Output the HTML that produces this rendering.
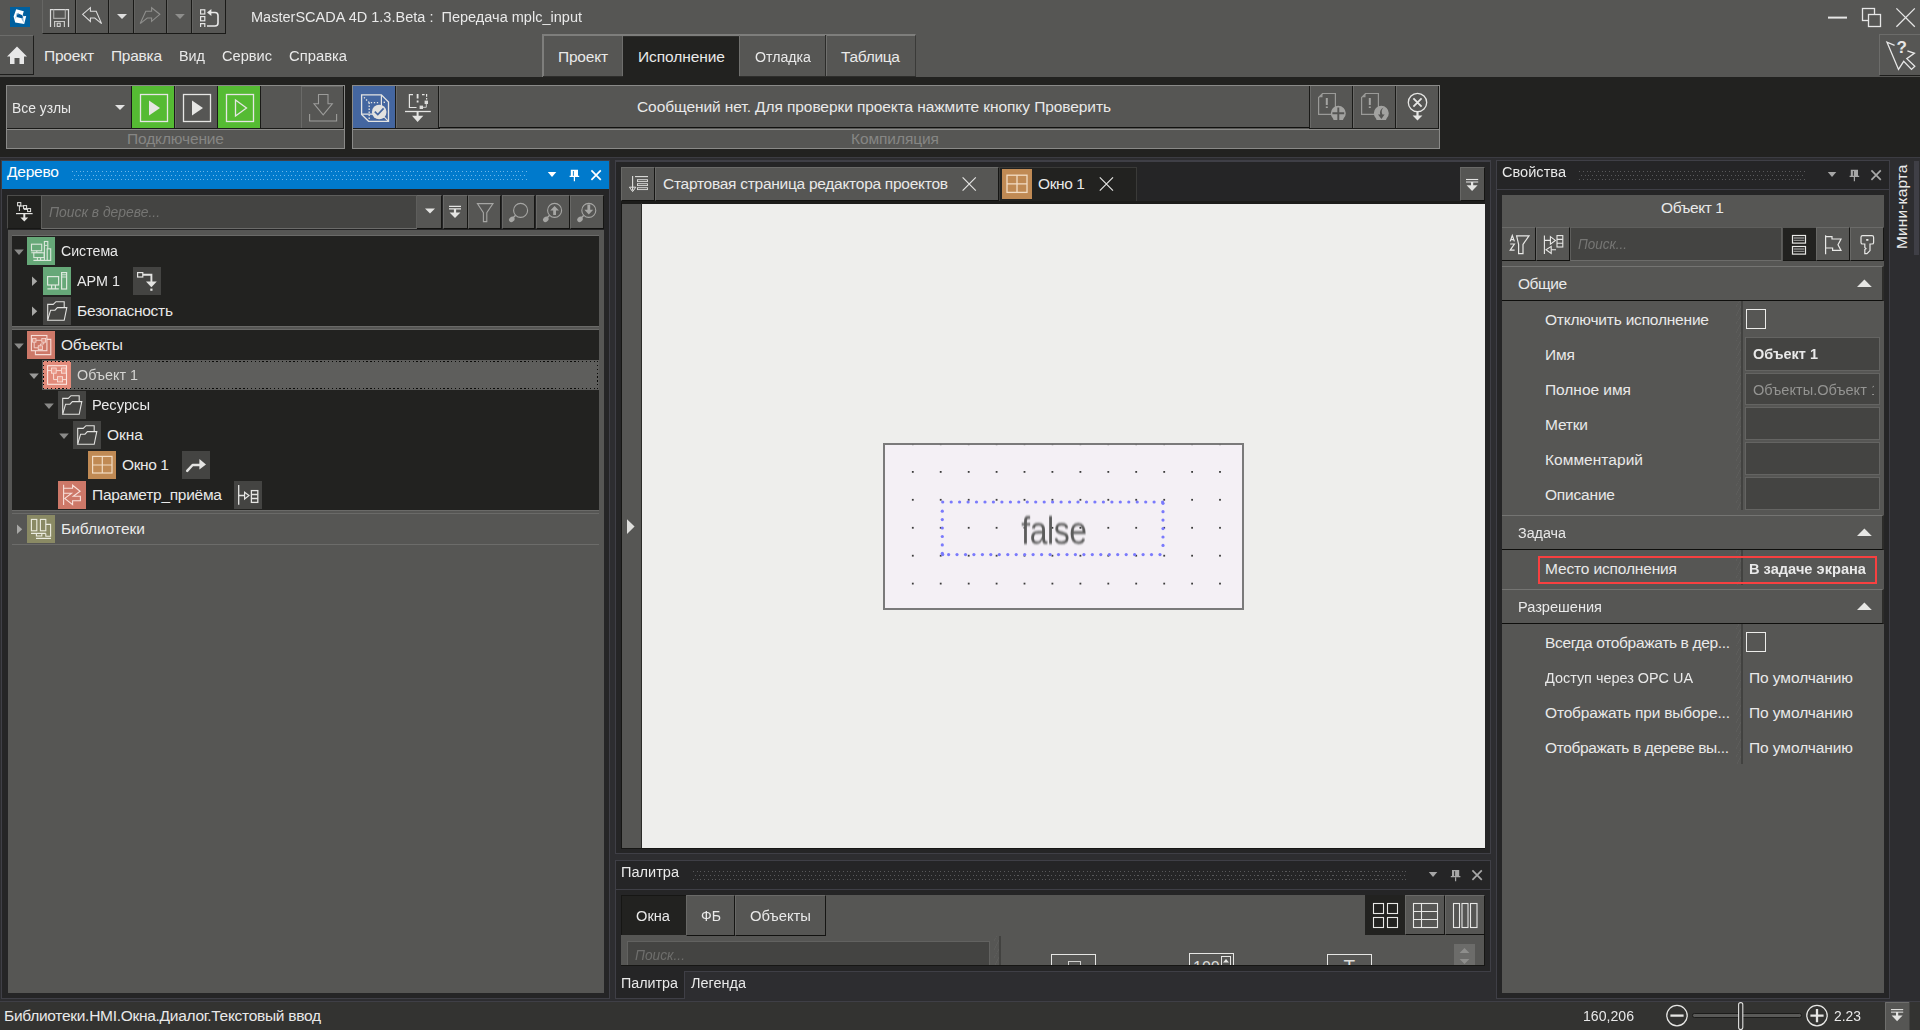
<!DOCTYPE html>
<html lang="ru">
<head>
<meta charset="utf-8">
<title>MasterSCADA 4D 1.3.Beta : Передача mplc_input</title>
<style>
html,body{margin:0;padding:0;}
body{width:1920px;height:1030px;overflow:hidden;background:#2d2d30;position:relative;
 font-family:"Liberation Sans",sans-serif;font-size:15.5px;color:#e9e9e9;}
.a{position:absolute;box-sizing:border-box;}
.t{position:absolute;white-space:nowrap;line-height:20px;height:20px;}
.g{background:#565654;}
.d{background:#222220;}
svg{position:absolute;overflow:visible;}
.btn{position:absolute;box-sizing:border-box;background:#565654;border-top:1px solid #6a6a68;border-left:1px solid #686866;border-right:1px solid #161614;border-bottom:1px solid #121210;}
.ph{color:#7d7d7b;font-style:italic;}
.fld{position:absolute;box-sizing:border-box;background:#444442;border:1px solid #5e5e5c;border-bottom-color:#6c6c6a;}
.hdr{position:absolute;box-sizing:border-box;background:#565654;border-top:1px solid #747472;border-bottom:1px solid #0e0e0c;border-right:2px solid #2c2c2a;}
.ico{position:absolute;width:28px;height:28px;}
.dots{position:absolute;height:1px;background:repeating-linear-gradient(90deg,var(--c) 0 1px,transparent 1px 3.75px);}
</style>
</head>
<body>

<!-- ===== title + menu bar ===== -->
<div class="a g" style="left:0;top:0;width:1920px;height:77px;"></div>
<!-- logo -->
<div class="a" style="left:10px;top:7px;width:20px;height:20px;background:#00609f;"></div>
<svg style="left:10px;top:7px;" width="20" height="20" viewBox="0 0 20 20"><g style="filter:blur(.45px)"><path d="M6.2 2.2 L13.8 4.2 L12.8 7.6 L13.4 9.2 L16.2 9 L14.2 17 L5.2 15.4 L3.6 9.6 Z" fill="#ffffff"/><path d="M6.6 7.6 L9.4 7 L12.4 8.2 L12.9 10 L12.6 11.6 L6.6 10 Z" fill="#00589a"/><path d="M6.4 6.4 L8.6 5.8 L9.4 7 L6.6 7.8 Z" fill="#5a98c8" opacity=".7"/><path d="M12.6 11.4 L13.2 10 L13.8 16 L11.2 11.6 Z" fill="#5a98c8" opacity=".75"/><path d="M5.4 9.6 L6.6 10 L5.4 12 Z" fill="#5a98c8" opacity=".5"/></g></svg>
<!-- quick toolbar -->
<div class="a" style="left:42px;top:0;width:184px;height:34px;background:#565654;border-left:1px solid #666664;border-right:1px solid #1a1a18;border-bottom:1px solid #1a1a18;"></div>
<div class="a" style="left:75px;top:0;width:1px;height:33px;background:#1a1a18;"></div>
<div class="a" style="left:108px;top:0;width:1px;height:33px;background:#1a1a18;"></div>
<div class="a" style="left:133px;top:0;width:1px;height:33px;background:#1a1a18;"></div>
<div class="a" style="left:166px;top:0;width:1px;height:33px;background:#1a1a18;"></div>
<div class="a" style="left:191px;top:0;width:1px;height:33px;background:#1a1a18;"></div>
<div class="a" style="left:76px;top:0;width:1px;height:33px;background:#626260;"></div>
<div class="a" style="left:109px;top:0;width:1px;height:33px;background:#626260;"></div>
<div class="a" style="left:134px;top:0;width:1px;height:33px;background:#626260;"></div>
<div class="a" style="left:167px;top:0;width:1px;height:33px;background:#626260;"></div>
<div class="a" style="left:192px;top:0;width:1px;height:33px;background:#626260;"></div>
<svg style="left:0;top:0;" width="240" height="34" viewBox="0 0 240 34" fill="none" stroke-linejoin="miter">
 <!-- save -->
 <path d="M50.5 27 V9.6 H68.5 V27" stroke="#dcdcdc" stroke-width="1.2"/>
 <path d="M53.7 9.6 V18.4 H65.3 V9.6" stroke="#a8a8a6" stroke-width="1.2"/>
 <path d="M54.6 27 V21.5 H64.4 V27" stroke="#c8c8c6" stroke-width="1.2"/>
 <rect x="57.2" y="23.2" width="3" height="3.2" stroke="#dcdcdc" stroke-width="1"/>
 <!-- undo -->
 <path d="M82.6 14.3 L90.4 7.7 V11.2 H96.2 L101.6 23.6 L94.8 18 H90.4 V21.4 Z" stroke="#dcdcdc" stroke-width="1.1"/>
 <path d="M117 14 H127 L122 19 Z" fill="#dedede" stroke="none"/>
 <!-- redo -->
 <path d="M159.8 14.3 L151.6 7.7 V11.2 H145.8 L140.2 23.6 L147.2 18 H151.6 V21.4 Z" stroke="#8e8e8c" stroke-width="1.1"/>
 <path d="M175 14 H184.8 L180 19 Z" fill="#8e8e8c" stroke="none"/>
 <!-- list/revert -->
 <rect x="200.6" y="9.8" width="4.2" height="4.2" stroke="#e4e4e4" stroke-width="1.2"/>
 <rect x="200.6" y="16.6" width="4.2" height="4.2" stroke="#e4e4e4" stroke-width="1.2"/>
 <path d="M200.6 27 V23.6 H204.8 V27" stroke="#e4e4e4" stroke-width="1.2"/>
 <path d="M211 12.5 H215 Q218 12.5 218 15.5 V23 Q218 26 215 26 H207" stroke="#e8e8e8" stroke-width="1.6"/>
 <path d="M207 12.5 L211.4 9 V16 Z" fill="#e8e8e8" stroke="none"/>
</svg>
<span class="t" style="left:251px;top:7px;transform:scaleX(0.9370);transform-origin:0 50%;">MasterSCADA 4D 1.3.Beta :&nbsp; Передача mplc_input</span>
<!-- window controls -->
<svg style="left:1820px;top:0;" width="100" height="34" viewBox="0 0 100 34" fill="none" stroke="#e6e6e6" stroke-width="1.3">
 <path d="M8 17.6 H27" stroke-width="2"/>
 <rect x="42.5" y="8.5" width="12" height="12" />
 <rect x="48.5" y="14.5" width="12" height="12" fill="#565654"/>
 <path d="M76.4 8.4 L94.8 26.8 M94.8 8.4 L76.4 26.8"/>
</svg>
<!-- home button -->
<div class="a" style="left:0;top:35px;width:34px;height:40px;background:#565654;border-top:1px solid #6c6c6a;border-right:1px solid #1e1e1c;border-bottom:1px solid #1e1e1c;"></div>
<svg style="left:0;top:35px;" width="34" height="40" viewBox="0 0 34 40"><path d="M17 11.5 L27 21.5 H24 V29 H19.5 V23 H14.5 V29 H10 V21.5 H7 Z" fill="#e8e8e8"/></svg>
<span class="t" style="left:44px;top:46px;letter-spacing:-0.212px;">Проект</span>
<span class="t" style="left:111px;top:46px;letter-spacing:-0.272px;">Правка</span>
<span class="t" style="left:179px;top:46px;transform:scaleX(0.9270);transform-origin:0 50%;">Вид</span>
<span class="t" style="left:222px;top:46px;transform:scaleX(0.9420);transform-origin:0 50%;">Сервис</span>
<span class="t" style="left:289px;top:46px;transform:scaleX(0.9538);transform-origin:0 50%;">Справка</span>
<!-- mode tabs -->
<div class="a" style="left:542px;top:34px;width:374px;height:43px;background:#565654;border-top:2px solid #7e7e7c;border-left:2px solid #7e7e7c;border-right:1px solid #3a3a38;"></div>
<div class="a" style="left:622px;top:36px;width:1px;height:40px;background:#6e6e6c;"></div>
<div class="a" style="left:543px;top:76px;width:80px;height:1px;background:#2e2e2c;"></div>
<div class="a" style="left:739px;top:76px;width:177px;height:1px;background:#2e2e2c;"></div>
<div class="a" style="left:623px;top:36px;width:116px;height:41px;background:#222220;border-top:1px solid #2e2e2c;"></div>
<div class="a" style="left:739px;top:35px;width:1px;height:41px;background:#70706e;"></div>
<div class="a" style="left:825px;top:35px;width:1px;height:41px;background:#2c2c2a;"></div>
<div class="a" style="left:826px;top:35px;width:1px;height:41px;background:#70706e;"></div>
<span class="t" style="left:558px;top:47px;letter-spacing:-0.212px;">Проект</span>
<span class="t" style="left:638px;top:47px;letter-spacing:-0.071px;">Исполнение</span>
<span class="t" style="left:755px;top:47px;transform:scaleX(0.9138);transform-origin:0 50%;">Отладка</span>
<span class="t" style="left:841px;top:47px;letter-spacing:-0.297px;">Таблица</span>
<!-- help button -->
<div class="a" style="left:1879px;top:34px;width:41px;height:42px;background:#565654;border-top:1px solid #6c6c6a;border-left:1px solid #6c6c6a;border-bottom:1px solid #1e1e1c;"></div>
<svg style="left:1880px;top:35px;" width="40" height="41" viewBox="1880 35 40 41" fill="none"><path d="M1894.6 45.4 L1887 42.2 L1898.5 69.4 L1903.7 61.4 L1911.5 69.4 L1914.8 66.3 L1906.8 58.6 L1914.4 53.3 L1907.4 50.8" stroke="#e8e8e8" stroke-width="1.3" stroke-linejoin="miter"/></svg>
<span class="t" style="left:1896.6px;top:38.4px;font-weight:bold;font-size:17px;color:#e6e6e6;">?</span>


<!-- ===== ribbon ===== -->
<div class="a d" style="left:0;top:77px;width:1920px;height:80px;"></div>
<div class="a" style="left:0;top:157px;width:1920px;height:1px;background:#3c3c42;"></div>
<!-- group 1 : Подключение -->
<div class="a g" style="left:6px;top:85px;width:339px;height:64px;border:1px solid #8a8a88;"></div>
<div class="a" style="left:7px;top:128px;width:337px;height:1px;background:#1a1a18;"></div>
<div class="a" style="left:7px;top:129px;width:337px;height:1px;background:#8a8a88;"></div>
<div class="a" style="left:131px;top:86px;width:1px;height:42px;background:#1a1a18;"></div>
<div class="a" style="left:132px;top:86px;width:42px;height:42px;background:#55bb33;"></div>
<div class="a" style="left:174px;top:86px;width:1px;height:42px;background:#1a1a18;"></div>
<div class="a" style="left:175px;top:86px;width:1px;height:42px;background:#6a6a68;"></div>
<div class="a" style="left:217px;top:86px;width:1px;height:42px;background:#1a1a18;"></div>
<div class="a" style="left:218px;top:86px;width:42px;height:42px;background:#55bb33;"></div>
<div class="a" style="left:260px;top:86px;width:1px;height:42px;background:#1a1a18;"></div>
<div class="a" style="left:301px;top:86px;width:1px;height:42px;background:#6a6a68;"></div>
<div class="a" style="left:302px;top:86px;width:41px;height:1px;background:#6a6a68;"></div>
<div class="a" style="left:343px;top:86px;width:1px;height:42px;background:#1a1a18;"></div>
<span class="t" style="left:12px;top:98px;transform:scaleX(0.8954);transform-origin:0 50%;">Все узлы</span>
<svg style="left:0;top:77px;" width="460" height="80" viewBox="0 77 460 80" fill="none">
 <path d="M115 105 H125 L120 110 Z" fill="#e2e2e2"/>
 <!-- run 1 -->
 <rect x="140.5" y="94.5" width="27" height="27" stroke="#e6e6e4" stroke-width="1.3"/>
 <path d="M149 100.5 L160 108 L149 115.5 Z" fill="#e6e6e4"/>
 <!-- run 2 -->
 <rect x="183.5" y="94.5" width="27" height="27" stroke="#e6e6e4" stroke-width="1.3"/>
 <path d="M192 100.5 L203 108 L192 115.5 Z" fill="#e6e6e4"/>
 <!-- run 3 -->
 <rect x="226.5" y="94.5" width="27" height="27" stroke="#e6e6e4" stroke-width="1.3"/>
 <path d="M235.5 100 L246.5 108 L235.5 116 Z" stroke="#e6e6e4" stroke-width="1.3"/>
 <!-- download -->
 <path d="M318.5 94.5 H328 V103.8 H332.3 L323.2 114.8 L314 103.8 H318.5 Z" stroke="#9c9c9a" stroke-width="1.1"/>
 <path d="M309.6 114 V121 H336.6 V114" stroke="#9c9c9a" stroke-width="1.1"/>
</svg>
<span class="t" style="left:127px;top:129px;letter-spacing:-0.130px;color:#868684;">Подключение</span>

<!-- group 2 : Компиляция -->
<div class="a g" style="left:352px;top:85px;width:1088px;height:64px;border:1px solid #8a8a88;"></div>
<div class="a" style="left:353px;top:128px;width:1086px;height:1px;background:#1a1a18;"></div>
<div class="a" style="left:353px;top:129px;width:1086px;height:1px;background:#8a8a88;"></div>
<div class="a" style="left:353px;top:86px;width:42px;height:42px;background:#4466a0;"></div>
<div class="a" style="left:395px;top:86px;width:1px;height:42px;background:#1a1a18;"></div>
<div class="a" style="left:396px;top:86px;width:1px;height:42px;background:#6a6a68;"></div>
<div class="a" style="left:438px;top:86px;width:1px;height:42px;background:#1a1a18;"></div>
<div class="a" style="left:439px;top:86px;width:1px;height:41px;background:#6a6a68;"></div>
<div class="a" style="left:439px;top:127px;width:870px;height:1px;background:#121210;"></div>
<div class="a g" style="left:440px;top:128px;width:869px;height:1px;"></div>
<div class="a" style="left:1309px;top:86px;width:1px;height:42px;background:#1a1a18;"></div>
<div class="a" style="left:1310px;top:86px;width:1px;height:42px;background:#6a6a68;"></div>
<div class="a" style="left:1352px;top:86px;width:1px;height:42px;background:#1a1a18;"></div>
<div class="a" style="left:1353px;top:86px;width:1px;height:42px;background:#6a6a68;"></div>
<div class="a" style="left:1395px;top:86px;width:1px;height:42px;background:#1a1a18;"></div>
<div class="a" style="left:1396px;top:86px;width:1px;height:42px;background:#6a6a68;"></div>
<div class="a" style="left:1438px;top:86px;width:1px;height:42px;background:#1a1a18;"></div>
<svg style="left:350px;top:77px;" width="100" height="80" viewBox="350 77 100 80" fill="none">
 <!-- check project cube -->
 <path d="M361.6 94.9 H381.4 L388.5 102 V121.3 H368.6 L361.6 114.4 Z" stroke="#e4e4e2" stroke-width="1.3"/>
 <path d="M381.4 94.9 V110 M361.6 114.2 H373 M381.4 114.2 L388.5 121.3" stroke="#e4e4e2" stroke-width="1.2"/>
 <path d="M364 97.4 L369.2 102.6 H379 M369.2 102.6 V119" stroke="#e4e4e2" stroke-width="1.3" stroke-dasharray="1.3 1.7"/>
 <rect x="383.6" y="101.6" width="1.4" height="1.4" fill="#e4e4e2"/>
 <circle cx="379.2" cy="112" r="7.3" fill="#e2e2e0"/>
 <path d="M374.8 111.6 L377.8 114.6 L383.6 108.4" stroke="#4466a0" stroke-width="1.7"/>
 <!-- compile/download -->
 <path d="M413 94.7 H409.4 V107.5 H416.5" stroke="#e4e4e2" stroke-width="1.2"/>
 <path d="M417.6 94 V98.4 M417.6 100.4 V102.6" stroke="#e4e4e2" stroke-width="1.8"/>
 <path d="M422 94.7 H426.6 V99.5" stroke="#e4e4e2" stroke-width="1.2" stroke-dasharray="2.6 1.4"/>
 <rect x="424.6" y="100.6" width="3.4" height="3.4" fill="#dcdcda"/>
 <rect x="419.6" y="105.6" width="3.4" height="3.4" fill="#dcdcda"/>
 <path d="M426.3 104 V107.3 H423" stroke="#c8c8c6" stroke-width="1"/>
 <path d="M405 111.5 H430.8" stroke="#e4e4e2" stroke-width="1.3"/>
 <path d="M417.6 111.5 V116.5" stroke="#e4e4e2" stroke-width="2"/>
 <path d="M412 115.8 H423.3 L417.6 122 Z" fill="#e4e4e2"/>
</svg>
<span class="t" style="left:637px;top:97px;letter-spacing:-0.084px;">Сообщений нет. Для проверки проекта нажмите кнопку Проверить</span>
<svg style="left:1300px;top:77px;" width="150" height="80" viewBox="1300 77 150 80" fill="none">
 <!-- doc ! plus -->
 <path d="M1322.5 93.5 H1335.4 V114.3 H1318.6 V97.4 Z" stroke="#9a9a98" stroke-width="1.2"/>
 <path d="M1318.8 97.2 L1322.5 93.7 V97.2 Z" fill="#9a9a98"/>
 <path d="M1326.8 98 V105 M1326.8 106.4 V108" stroke="#a4a4a2" stroke-width="2"/>
 <path d="M1330.8 113.3 A7.5 7.5 0 0 1 1345.8 113.3 A7.5 7.5 0 0 1 1343.6 118.6 L1343 119.9 H1333.6 L1333 118.6 A7.5 7.5 0 0 1 1330.8 113.3 Z" fill="#a2a2a0"/>
 <path d="M1332.4 113.3 H1344.2 M1338.3 107.4 V119.9" stroke="#565654" stroke-width="1.9"/>
 <!-- doc ! refresh -->
 <path d="M1365.5 93.5 H1378.4 V114.3 H1361.6 V97.4 Z" stroke="#9a9a98" stroke-width="1.2"/>
 <path d="M1361.8 97.2 L1365.5 93.7 V97.2 Z" fill="#9a9a98"/>
 <path d="M1369.8 98 V105 M1369.8 106.4 V108" stroke="#a4a4a2" stroke-width="2"/>
 <path d="M1373.8 113.3 A7.5 7.5 0 0 1 1388.8 113.3 A7.5 7.5 0 0 1 1386.6 118.6 L1386 119.9 H1376.6 L1376 118.6 A7.5 7.5 0 0 1 1373.8 113.3 Z" fill="#a2a2a0"/>
 <path d="M1383.6 107.6 Q1380.6 110.4 1382.4 114.6 H1384.6 L1381.4 119 L1378 114.6 H1380.2 Q1379 110 1383.6 107.6 Z" fill="#565654"/>
 <!-- circle x arrow -->
 <circle cx="1417.5" cy="102.5" r="9.2" stroke="#e6e6e4" stroke-width="1.3"/>
 <path d="M1413.4 98.4 L1421.6 106.6 M1421.6 98.4 L1413.4 106.6" stroke="#e6e6e4" stroke-width="1.8"/>
 <path d="M1417.5 111.8 V116.5" stroke="#e6e6e4" stroke-width="2.2"/>
 <path d="M1412.6 115.6 H1422.4 L1417.5 120.4 Z" fill="#e6e6e4"/>
</svg>
<span class="t" style="left:851px;top:129px;letter-spacing:-0.082px;color:#868684;">Компиляция</span>


<!-- ===== tree panel ===== -->
<!-- panel frame -->
<div class="a" style="left:1px;top:160px;width:609px;height:839px;background:#252526;border:1px solid #3f3f46;"></div>
<div class="a" style="left:2px;top:161px;width:607px;height:28px;background:#007acc;"></div>
<span class="t" style="left:7px;top:162px;letter-spacing:-0.209px;color:#ffffff;">Дерево</span>
<div class="dots" style="left:72px;top:171px;width:456px;--c:#6ab6ea;"></div>
<div class="dots" style="left:74px;top:175px;width:452px;--c:#6ab6ea;"></div>
<div class="dots" style="left:72px;top:179px;width:456px;--c:#6ab6ea;"></div>
<svg style="left:540px;top:161px;" width="70" height="28" viewBox="540 161 70 28" fill="none">
 <path d="M547.8 172 H556.3 L552 177 Z" fill="#ffffff"/>
 <path d="M570.8 169.8 H578 V175.8 H579.2 V177 H569.6 V175.8 H570.8 Z" fill="#ffffff"/>
 <path d="M573.4 171 V175.8" stroke="#007acc" stroke-width=".9"/>
 <path d="M574.4 177 V181.2" stroke="#ffffff" stroke-width="1.2"/>
 <path d="M591.4 170.4 L600.8 179.8 M600.8 170.4 L591.4 179.8" stroke="#ffffff" stroke-width="1.7"/>
</svg>
<!-- search row -->
<div class="a" style="left:7px;top:195px;width:34px;height:34px;background:#222220;border-left:1px solid #4c4c4a;border-top:1px solid #4c4c4a;border-bottom:1px solid #181816;"></div>
<div class="fld" style="left:41px;top:195px;width:376px;height:34px;"></div>
<span class="t" style="left:49px;top:202px;transform:scaleX(0.8954);transform-origin:0 50%;font-style:italic;color:#767674;">Поиск в дереве...</span>
<div class="btn" style="left:417px;top:195px;width:25px;height:34px;border-left:none;"></div>
<div class="btn" style="left:443px;top:195px;width:25px;height:34px;"></div>
<div class="btn" style="left:468px;top:195px;width:33px;height:34px;"></div>
<div class="btn" style="left:502px;top:195px;width:33px;height:34px;"></div>
<div class="btn" style="left:536px;top:195px;width:34px;height:34px;"></div>
<div class="btn" style="left:570px;top:195px;width:34px;height:34px;"></div>
<svg style="left:0;top:190px;" width="611" height="45" viewBox="0 190 611 45" fill="none">
 <!-- tree/collapse icon -->
 <path d="M19.4 203.6 V211 M19.4 206 H24 V209.4 H28.4" stroke="#e4e4e2" stroke-width="1"/>
 <rect x="17.6" y="202.6" width="3.2" height="3.2" fill="#222220" stroke="#e4e4e2" stroke-width="1"/>
 <rect x="23.6" y="205.6" width="3" height="3" fill="#222220" stroke="#e4e4e2" stroke-width="1"/>
 <rect x="27.6" y="208.6" width="3" height="3" fill="#222220" stroke="#e4e4e2" stroke-width="1"/>
 <path d="M16 213.6 H32.6" stroke="#e4e4e2" stroke-width="1.2"/>
 <path d="M24.3 213.6 V218" stroke="#e4e4e2" stroke-width="2"/>
 <path d="M20.4 217.4 H28.2 L24.3 221.6 Z" fill="#e4e4e2"/>
 <!-- dropdown -->
 <path d="M425 208.6 H435 L430 213.4 Z" fill="#e4e4e2"/>
 <!-- collapse all -->
 <path d="M449 206.4 H461 M449 208.8 H461" stroke="#e4e4e2" stroke-width="1.2"/>
 <path d="M455 209 V213.4" stroke="#e4e4e2" stroke-width="2.2"/>
 <path d="M449.6 212.6 H460.4 L455 218 Z" fill="#e4e4e2"/>
 <!-- filter -->
 <path d="M477.4 203.6 H493 L486.8 212.6 V221.6 H483.4 V212.6 Z" stroke="#a6a6a4" stroke-width="1.1"/>
 <!-- search -->
 <circle cx="520.6" cy="210.4" r="7" stroke="#a6a6a4" stroke-width="1.1"/>
 <path d="M515.4 215.4 L512.4 218.4" stroke="#a6a6a4" stroke-width="1.4"/>
 <ellipse cx="511.8" cy="219.4" rx="3" ry="2.4" transform="rotate(-40 511.8 219.4)" fill="#a6a6a4"/>
 <!-- search up -->
 <circle cx="554.6" cy="210.4" r="7" stroke="#a6a6a4" stroke-width="1.1"/>
 <path d="M549.4 215.4 L546.4 218.4" stroke="#a6a6a4" stroke-width="1.4"/>
 <ellipse cx="545.8" cy="219.4" rx="3" ry="2.4" transform="rotate(-40 545.8 219.4)" fill="#a6a6a4"/>
 <path d="M554.6 206 L559 210.6 H556 V215 H553.2 V210.6 H550.2 Z" fill="#a6a6a4"/>
 <!-- search down -->
 <circle cx="588.8" cy="210.4" r="7" stroke="#a6a6a4" stroke-width="1.1"/>
 <path d="M583.6 215.4 L580.6 218.4" stroke="#a6a6a4" stroke-width="1.4"/>
 <ellipse cx="580" cy="219.4" rx="3" ry="2.4" transform="rotate(-40 580 219.4)" fill="#a6a6a4"/>
 <path d="M588.8 214.4 L593.2 209.8 H590.2 V204.4 H587.4 V209.8 H584.4 Z" fill="#a6a6a4"/>
</svg>
<!-- tree body -->
<div class="a g" style="left:8px;top:230px;width:596px;height:763px;"></div>
<div class="a" style="left:12px;top:235px;width:587px;height:1px;background:#6a6a68;"></div>
<div class="a d" style="left:12px;top:236px;width:587px;height:90px;"></div>
<div class="a g" style="left:12px;top:326px;width:587px;height:4px;"></div>
<div class="a" style="left:12px;top:326px;width:587px;height:1px;background:#6a6a68;"></div>
<div class="a" style="left:12px;top:329px;width:587px;height:1px;background:#6a6a68;"></div>
<div class="a d" style="left:12px;top:330px;width:587px;height:180px;"></div>
<div class="a" style="left:12px;top:510px;width:587px;height:1px;background:#6a6a68;"></div>
<div class="a" style="left:12px;top:513px;width:587px;height:1px;background:#6a6a68;"></div>
<div class="a" style="left:12px;top:544px;width:587px;height:1px;background:#6c6c6a;"></div>
<!-- selection -->
<div class="a" style="left:42px;top:360px;width:557px;height:30px;background:#5e5e5c;"></div>
<!-- expanders -->
<svg style="left:0;top:230px;" width="80" height="320" viewBox="0 230 80 320">
 <path d="M14.2 249.5 H23.8 L19.0 254.9 Z" fill="#8a8a88"/>
 <path d="M32 276.4 L37.2 281.2 L32 286 Z" fill="#a8a8a6"/>
 <path d="M32 306.4 L37.2 311.2 L32 316 Z" fill="#a8a8a6"/>
 <path d="M14.2 343.5 H23.8 L19.0 348.9 Z" fill="#8a8a88"/>
 <path d="M29.2 373.5 H38.8 L34.0 378.9 Z" fill="#9a9a98"/>
 <path d="M44.2 403.5 H53.8 L49.0 408.9 Z" fill="#8a8a88"/>
 <path d="M59.2 433.5 H68.8 L64.0 438.9 Z" fill="#8a8a88"/>
 <path d="M17 524.4 L22.2 529.2 L17 534 Z" fill="#a8a8a6"/>
</svg>
<!-- icons -->
<svg class="ico" style="left:27px;top:237px;" viewBox="0 0 28 28" fill="none" stroke="#dce8dc" stroke-width="1.1"><rect width="28" height="28" fill="#66a878" stroke="none"/><rect x="4.5" y="7.2" width="10.2" height="6.6"/><path d="M9.8 13.8 V15.7 M4.3 15.8 H14.8"/><rect x="6.8" y="15.8" width="10.4" height="4.8" fill="#66a878"/><path d="M10.4 20.6 V23.2 M13.6 20.6 V23.2 M6.4 23.4 H17.4"/><rect x="17.4" y="4.5" width="3.4" height="18.9" fill="#66a878"/><rect x="20.2" y="11.8" width="3.5" height="11.6" fill="#66a878"/><path d="M17.8 8.4 H20.4" stroke-width=".9"/></svg>
<svg class="ico" style="left:43px;top:267px;" viewBox="0 0 28 28" fill="none" stroke="#dce8dc" stroke-width="1.2"><rect width="28" height="28" fill="#66a878" stroke="none"/><rect x="4.6" y="9.6" width="11" height="8.4"/><path d="M8.6 18 V21.6 M12.4 18 V21.6 M4.4 21.8 H15.8"/><rect x="18.6" y="5.6" width="5" height="16.4"/><path d="M19 7.8 H23.4 M19 10 H23.4" stroke-width=".9"/></svg>
<svg class="ico" style="left:43px;top:297px;" viewBox="0 0 28 28" fill="none" stroke="#e2e2e0" stroke-width="1.1"><rect width="28" height="28" fill="#444442" stroke="none"/><path d="M4.7 22.6 V7.4 H10.2 L13 4.7 H21.2 V10.4"/><path d="M4.6 23.3 L7.6 13.2 H12 L14.4 10.6 H23.8 L21.2 23.3 Z"/></svg>
<svg class="ico" style="left:27px;top:331px;" viewBox="0 0 28 28" fill="none" stroke="#f6dcd6" stroke-width="1.1"><rect width="28" height="28" fill="#cd7868" stroke="none"/><path d="M20 8.4 H23.8 V23.6 H8.4 V19.8"/><rect x="4.4" y="4.5" width="15.5" height="15.2"/><path d="M9.1 9.3 H14.7 M7.2 11.3 V16.8 H11 M16.8 11.3 V13 H13.4 V14.7" stroke-width=".9"/><rect x="5.6" y="7.4" width="3.4" height="3.8" fill="#e08e7e" stroke-width=".8"/><rect x="14.8" y="7.4" width="3.8" height="3.8" fill="#e08e7e" stroke-width=".8"/><rect x="11.2" y="14.8" width="4.2" height="3.8" fill="#e08e7e" stroke-width=".8"/></svg>
<svg class="ico" style="left:43px;top:361px;" viewBox="0 0 28 28" fill="none" stroke="#fbe6e0" stroke-width="1.1"><rect width="28" height="28" fill="#e28a7a" stroke="none"/><rect x="4.6" y="4.7" width="18.9" height="18.6"/><path d="M4.6 9.6 H8.2 M13.2 9.6 H18.4 M10.6 12.4 V18.6 H14.2 M19.8 18.6 H23.4" stroke-width=".9"/><rect x="8.4" y="7" width="4.8" height="5.2" fill="#ec9c8c" stroke-width=".8"/><rect x="18.5" y="7" width="4.6" height="5.2" fill="#ec9c8c" stroke-width=".8"/><rect x="14.4" y="15.7" width="5.2" height="5.2" fill="#ec9c8c" stroke-width=".8"/></svg>
<svg class="ico" style="left:58px;top:391px;" viewBox="0 0 28 28" fill="none" stroke="#e2e2e0" stroke-width="1.1"><rect width="28" height="28" fill="#444442" stroke="none"/><path d="M4.7 22.6 V7.4 H10.2 L13 4.7 H21.2 V10.4"/><path d="M4.6 23.3 L7.6 13.2 H12 L14.4 10.6 H23.8 L21.2 23.3 Z"/></svg>
<svg class="ico" style="left:73px;top:421px;" viewBox="0 0 28 28" fill="none" stroke="#e2e2e0" stroke-width="1.1"><rect width="28" height="28" fill="#444442" stroke="none"/><path d="M4.7 22.6 V7.4 H10.2 L13 4.7 H21.2 V10.4"/><path d="M4.6 23.3 L7.6 13.2 H12 L14.4 10.6 H23.8 L21.2 23.3 Z"/></svg>
<svg class="ico" style="left:88px;top:451px;" viewBox="0 0 28 28" fill="none" stroke="#f2dcc4" stroke-width="1.2"><rect width="28" height="28" fill="#c08a54" stroke="none"/><rect x="4.6" y="5.4" width="19.4" height="16.6"/><path d="M14.3 5.4 V22 M4.6 14 H24"/></svg>
<svg class="ico" style="left:58px;top:481px;" viewBox="0 0 28 28" fill="none" stroke="#f8e0da" stroke-width="1.1"><rect width="28" height="28" fill="#cd7868" stroke="none"/><path d="M5.6 3.8 V23.9"/><path d="M5.6 7.2 H14.6 V4.2 L22.1 10.3 L15.3 15.2 H22.4 V19.8 H14.6 V23.6 L6.8 17.4 L13.6 12.2 H5.6"/></svg>
<svg class="ico" style="left:27px;top:515px;" viewBox="0 0 28 28" fill="none" stroke="#ecece0" stroke-width="1.1"><rect width="28" height="28" fill="#8a8a64" stroke="none"/><rect x="4.4" y="4.4" width="5.4" height="11.4"/><rect x="13.4" y="4.4" width="5.4" height="11.4"/><path d="M18.8 9.4 H23.6 V21.2 H18.8 V18.4"/><path d="M4 18.4 H18.8 M9.4 18.4 V21 H14.8 V18.4 M9 23.4 H24"/></svg>
<!-- side badges -->
<svg class="ico" style="left:133px;top:267px;" viewBox="0 0 28 28" fill="none" stroke="#e4e4e2" stroke-width="1.2"><rect width="28" height="28" fill="#444442" stroke="none"/><rect x="4.6" y="5.6" width="5.2" height="4.4"/><path d="M9.8 7.8 H18.4 V15" stroke-width="1.9"/><path d="M13 14.4 H23.8 L18.4 20.2 Z" fill="#e4e4e2" stroke="none"/><rect x="17.3" y="21.6" width="2.2" height="2.2" fill="#e4e4e2" stroke="none"/></svg>
<svg class="ico" style="left:182px;top:451px;" viewBox="0 0 28 28" fill="none"><rect width="28" height="28" fill="#444442"/><path d="M5.2 19.8 L10.6 14 H18" stroke="#e4e4e2" stroke-width="2.5" stroke-linecap="round" stroke-linejoin="round"/><path d="M17.4 8 L24 13.4 L17.4 18.4 Z" fill="#e4e4e2"/></svg>
<svg class="ico" style="left:234px;top:481px;" viewBox="0 0 28 28" fill="none" stroke="#e4e4e2" stroke-width="1.1"><rect width="28" height="28" fill="#444442" stroke="none"/><path d="M4.7 4.1 V23.8 M4.7 14.5 H10.4" stroke-width="1.3"/><path d="M10.6 11.2 L15 14.5 L10.6 18 Z" stroke-width="1.2"/><rect x="17.4" y="9.6" width="6.4" height="11.8" stroke-width="1.3"/><path d="M17.4 13.5 H23.8 M17.4 17.5 H23.8" stroke-width="1.3"/></svg>
<div class="a" style="left:43px;top:361px;width:555px;height:1.2px;background:repeating-linear-gradient(90deg,#0a0a08 0 1.3px,transparent 1.3px 3.85px);"></div>
<div class="a" style="left:43px;top:388px;width:555px;height:1.2px;background:repeating-linear-gradient(90deg,#0a0a08 0 1.3px,transparent 1.3px 3.85px);"></div>
<div class="a" style="left:43px;top:361px;width:1.2px;height:28px;background:repeating-linear-gradient(180deg,#0a0a08 0 1.3px,transparent 1.3px 3.85px);"></div>
<div class="a" style="left:597px;top:361px;width:1.2px;height:28px;background:repeating-linear-gradient(180deg,#0a0a08 0 1.3px,transparent 1.3px 3.85px);"></div>
<!-- labels -->
<span class="t" style="left:61px;top:241px;transform:scaleX(0.9129);transform-origin:0 50%;">Система</span>
<span class="t" style="left:77px;top:271px;transform:scaleX(0.9278);transform-origin:0 50%;">АРМ 1</span>
<span class="t" style="left:77px;top:301px;letter-spacing:-0.261px;">Безопасность</span>
<span class="t" style="left:61px;top:335px;letter-spacing:-0.323px;">Объекты</span>
<span class="t" style="left:77px;top:365px;transform:scaleX(0.9282);transform-origin:0 50%;color:#d4d4d2;">Объект 1</span>
<span class="t" style="left:92px;top:395px;transform:scaleX(0.9489);transform-origin:0 50%;">Ресурсы</span>
<span class="t" style="left:107px;top:425px;letter-spacing:-0.010px;">Окна</span>
<span class="t" style="left:122px;top:455px;letter-spacing:-0.391px;">Окно 1</span>
<span class="t" style="left:92px;top:485px;letter-spacing:-0.263px;">Параметр_приёма</span>
<span class="t" style="left:61px;top:519px;letter-spacing:0.002px;">Библиотеки</span>


<!-- ===== center panel ===== -->
<!-- center panel frame -->
<div class="a" style="left:615px;top:160px;width:876px;height:694px;background:#252526;border:1px solid #3f3f46;border-top-width:2px;"></div>
<!-- tab strip -->
<div class="btn" style="left:621px;top:167px;width:34px;height:34px;"></div>
<div class="btn" style="left:655px;top:167px;width:344px;height:34px;"></div>
<div class="a" style="left:999px;top:167px;width:138px;height:35px;background:#222220;border:1px solid #3a3a38;border-bottom:none;"></div>
<div class="btn" style="left:1460px;top:167px;width:25px;height:34px;"></div>
<div class="a" style="left:621px;top:201px;width:864px;height:3px;background:#1c1c1a;"></div>
<svg style="left:620px;top:165px;" width="870" height="40" viewBox="620 165 870 40" fill="none">
 <!-- tab list icon -->
 <path d="M632.6 176 V190.4" stroke="#e0e0de" stroke-width="1.1"/>
 <path d="M629.4 187.2 H635.8 L632.6 191.6 Z" stroke="#e0e0de" stroke-width="1" fill="none"/>
 <path d="M635 176.6 H648" stroke="#e0e0de" stroke-width="1.1"/>
 <rect x="637.5" y="179.7" width="10" height="1.9" stroke="#e0e0de" stroke-width=".9"/>
 <rect x="637.5" y="183.7" width="10" height="1.9" stroke="#e0e0de" stroke-width=".9"/>
 <rect x="637.5" y="187.7" width="10" height="1.9" stroke="#e0e0de" stroke-width=".9"/>
 <!-- close x tab1 -->
 <path d="M962.6 177.4 L975.8 190.6 M975.8 177.4 L962.6 190.6" stroke="#e4e4e2" stroke-width="1.2"/>
 <!-- window icon tab 2 -->
 <rect x="1002" y="169" width="30" height="30" fill="#c08a54"/>
 <rect x="1007" y="175.2" width="20" height="17.2" stroke="#f2dcc4" stroke-width="1.3"/>
 <path d="M1017 175.2 V192.4 M1007 183.8 H1027" stroke="#f2dcc4" stroke-width="1.3"/>
 <!-- close x tab2 -->
 <path d="M1099.8 177.4 L1113 190.6 M1113 177.4 L1099.8 190.6" stroke="#e4e4e2" stroke-width="1.2"/>
 <!-- right drop button -->
 <path d="M1466 179.5 H1478.2" stroke="#e4e4e2" stroke-width="1.1"/>
 <path d="M1466 182 H1478.2" stroke="#b0b0ae" stroke-width="1.6"/>
 <path d="M1472.1 182 V186" stroke="#e4e4e2" stroke-width="2.2"/>
 <path d="M1466.6 185.2 H1477.6 L1472.1 191 Z" fill="#e4e4e2"/>
</svg>
<span class="t" style="left:663px;top:174px;letter-spacing:-0.269px;">Стартовая страница редактора проектов</span>
<span class="t" style="left:1038px;top:174px;letter-spacing:-0.391px;">Окно 1</span>
<!-- canvas -->
<div class="a g" style="left:622px;top:204px;width:20px;height:644px;"></div>
<div class="a" style="left:621px;top:203px;width:1px;height:646px;background:#161614;"></div>
<div class="a" style="left:641px;top:203px;width:1px;height:646px;background:#2a2a28;"></div>
<div class="a" style="left:642px;top:204px;width:843px;height:644px;background:#eeeeec;"></div>
<div class="a" style="left:621px;top:848px;width:864px;height:1px;background:#161614;"></div>
<svg style="left:625px;top:515px;" width="14" height="24" viewBox="625 515 14 24"><path d="M627 519.2 L634.6 526.6 L627 534 Z" fill="#dededc"/></svg>
<!-- drawing window -->
<div class="a" style="left:883px;top:443px;width:361px;height:167px;background:#f4f0f5;border:2px solid #7a7a7a;"></div>
<svg style="left:880px;top:440px;" width="370" height="175" viewBox="880 440 370 175">
 <g fill="#3c3c3c">
  <rect x="912.0" y="444.6" width="1.6" height="0.8" opacity=".35"/><rect x="939.9" y="444.6" width="1.6" height="0.8" opacity=".35"/><rect x="967.9" y="444.6" width="1.6" height="0.8" opacity=".35"/><rect x="995.8" y="444.6" width="1.6" height="0.8" opacity=".35"/><rect x="1023.7" y="444.6" width="1.6" height="0.8" opacity=".35"/><rect x="1051.7" y="444.6" width="1.6" height="0.8" opacity=".35"/><rect x="1079.6" y="444.6" width="1.6" height="0.8" opacity=".35"/><rect x="1107.5" y="444.6" width="1.6" height="0.8" opacity=".35"/><rect x="1135.4" y="444.6" width="1.6" height="0.8" opacity=".35"/><rect x="1163.4" y="444.6" width="1.6" height="0.8" opacity=".35"/><rect x="1191.3" y="444.6" width="1.6" height="0.8" opacity=".35"/><rect x="1219.2" y="444.6" width="1.6" height="0.8" opacity=".35"/><rect x="911.9" y="471.0" width="1.8" height="1.8"/><rect x="939.8" y="471.0" width="1.8" height="1.8"/><rect x="967.8" y="471.0" width="1.8" height="1.8"/><rect x="995.7" y="471.0" width="1.8" height="1.8"/><rect x="1023.6" y="471.0" width="1.8" height="1.8"/><rect x="1051.5" y="471.0" width="1.8" height="1.8"/><rect x="1079.5" y="471.0" width="1.8" height="1.8"/><rect x="1107.4" y="471.0" width="1.8" height="1.8"/><rect x="1135.3" y="471.0" width="1.8" height="1.8"/><rect x="1163.3" y="471.0" width="1.8" height="1.8"/><rect x="1191.2" y="471.0" width="1.8" height="1.8"/><rect x="1219.1" y="471.0" width="1.8" height="1.8"/><rect x="911.9" y="498.9" width="1.8" height="1.8"/><rect x="939.8" y="498.9" width="1.8" height="1.8"/><rect x="967.8" y="498.9" width="1.8" height="1.8"/><rect x="995.7" y="498.9" width="1.8" height="1.8"/><rect x="1023.6" y="498.9" width="1.8" height="1.8"/><rect x="1051.5" y="498.9" width="1.8" height="1.8"/><rect x="1079.5" y="498.9" width="1.8" height="1.8"/><rect x="1107.4" y="498.9" width="1.8" height="1.8"/><rect x="1135.3" y="498.9" width="1.8" height="1.8"/><rect x="1163.3" y="498.9" width="1.8" height="1.8"/><rect x="1191.2" y="498.9" width="1.8" height="1.8"/><rect x="1219.1" y="498.9" width="1.8" height="1.8"/><rect x="911.9" y="526.9" width="1.8" height="1.8"/><rect x="939.8" y="526.9" width="1.8" height="1.8"/><rect x="967.8" y="526.9" width="1.8" height="1.8"/><rect x="995.7" y="526.9" width="1.8" height="1.8"/><rect x="1023.6" y="526.9" width="1.8" height="1.8"/><rect x="1051.5" y="526.9" width="1.8" height="1.8"/><rect x="1079.5" y="526.9" width="1.8" height="1.8"/><rect x="1107.4" y="526.9" width="1.8" height="1.8"/><rect x="1135.3" y="526.9" width="1.8" height="1.8"/><rect x="1163.3" y="526.9" width="1.8" height="1.8"/><rect x="1191.2" y="526.9" width="1.8" height="1.8"/><rect x="1219.1" y="526.9" width="1.8" height="1.8"/><rect x="911.9" y="554.8" width="1.8" height="1.8"/><rect x="939.8" y="554.8" width="1.8" height="1.8"/><rect x="967.8" y="554.8" width="1.8" height="1.8"/><rect x="995.7" y="554.8" width="1.8" height="1.8"/><rect x="1023.6" y="554.8" width="1.8" height="1.8"/><rect x="1051.5" y="554.8" width="1.8" height="1.8"/><rect x="1079.5" y="554.8" width="1.8" height="1.8"/><rect x="1107.4" y="554.8" width="1.8" height="1.8"/><rect x="1135.3" y="554.8" width="1.8" height="1.8"/><rect x="1163.3" y="554.8" width="1.8" height="1.8"/><rect x="1191.2" y="554.8" width="1.8" height="1.8"/><rect x="1219.1" y="554.8" width="1.8" height="1.8"/><rect x="911.9" y="582.7" width="1.8" height="1.8"/><rect x="939.8" y="582.7" width="1.8" height="1.8"/><rect x="967.8" y="582.7" width="1.8" height="1.8"/><rect x="995.7" y="582.7" width="1.8" height="1.8"/><rect x="1023.6" y="582.7" width="1.8" height="1.8"/><rect x="1051.5" y="582.7" width="1.8" height="1.8"/><rect x="1079.5" y="582.7" width="1.8" height="1.8"/><rect x="1107.4" y="582.7" width="1.8" height="1.8"/><rect x="1135.3" y="582.7" width="1.8" height="1.8"/><rect x="1163.3" y="582.7" width="1.8" height="1.8"/><rect x="1191.2" y="582.7" width="1.8" height="1.8"/><rect x="1219.1" y="582.7" width="1.8" height="1.8"/>
 </g>
 <g fill="#7a7afc" style="filter:blur(.35px)">
  <circle cx="942.7" cy="502.0" r="1.6"/><circle cx="951.2" cy="502.0" r="1.6"/><circle cx="959.6" cy="502.0" r="1.6"/><circle cx="968.1" cy="502.0" r="1.6"/><circle cx="976.5" cy="502.0" r="1.6"/><circle cx="985.0" cy="502.0" r="1.6"/><circle cx="993.4" cy="502.0" r="1.6"/><circle cx="1001.9" cy="502.0" r="1.6"/><circle cx="1010.4" cy="502.0" r="1.6"/><circle cx="1018.8" cy="502.0" r="1.6"/><circle cx="1027.3" cy="502.0" r="1.6"/><circle cx="1035.7" cy="502.0" r="1.6"/><circle cx="1044.2" cy="502.0" r="1.6"/><circle cx="1052.6" cy="502.0" r="1.6"/><circle cx="1061.1" cy="502.0" r="1.6"/><circle cx="1069.6" cy="502.0" r="1.6"/><circle cx="1078.0" cy="502.0" r="1.6"/><circle cx="1086.5" cy="502.0" r="1.6"/><circle cx="1094.9" cy="502.0" r="1.6"/><circle cx="1103.4" cy="502.0" r="1.6"/><circle cx="1111.9" cy="502.0" r="1.6"/><circle cx="1120.3" cy="502.0" r="1.6"/><circle cx="1128.8" cy="502.0" r="1.6"/><circle cx="1137.2" cy="502.0" r="1.6"/><circle cx="1145.7" cy="502.0" r="1.6"/><circle cx="1154.1" cy="502.0" r="1.6"/><circle cx="1162.6" cy="502.0" r="1.6"/><circle cx="1160.0" cy="554.6" r="1.6"/><circle cx="1151.5" cy="554.6" r="1.6"/><circle cx="1143.1" cy="554.6" r="1.6"/><circle cx="1134.6" cy="554.6" r="1.6"/><circle cx="1126.2" cy="554.6" r="1.6"/><circle cx="1117.7" cy="554.6" r="1.6"/><circle cx="1109.3" cy="554.6" r="1.6"/><circle cx="1100.8" cy="554.6" r="1.6"/><circle cx="1092.3" cy="554.6" r="1.6"/><circle cx="1083.9" cy="554.6" r="1.6"/><circle cx="1075.4" cy="554.6" r="1.6"/><circle cx="1067.0" cy="554.6" r="1.6"/><circle cx="1058.5" cy="554.6" r="1.6"/><circle cx="1050.1" cy="554.6" r="1.6"/><circle cx="1041.6" cy="554.6" r="1.6"/><circle cx="1033.1" cy="554.6" r="1.6"/><circle cx="1024.7" cy="554.6" r="1.6"/><circle cx="1016.2" cy="554.6" r="1.6"/><circle cx="1007.8" cy="554.6" r="1.6"/><circle cx="999.3" cy="554.6" r="1.6"/><circle cx="990.8" cy="554.6" r="1.6"/><circle cx="982.4" cy="554.6" r="1.6"/><circle cx="973.9" cy="554.6" r="1.6"/><circle cx="965.5" cy="554.6" r="1.6"/><circle cx="957.0" cy="554.6" r="1.6"/><circle cx="948.6" cy="554.6" r="1.6"/><circle cx="942.7" cy="554.6" r="1.6"/><circle cx="942.3" cy="511.2" r="1.6"/><circle cx="1163.0" cy="545.4" r="1.6"/><circle cx="942.3" cy="519.6" r="1.6"/><circle cx="1163.0" cy="537.0" r="1.6"/><circle cx="942.3" cy="528.0" r="1.6"/><circle cx="1163.0" cy="528.6" r="1.6"/><circle cx="942.3" cy="536.5" r="1.6"/><circle cx="1163.0" cy="520.1" r="1.6"/><circle cx="942.3" cy="544.9" r="1.6"/><circle cx="1163.0" cy="511.7" r="1.6"/><circle cx="942.3" cy="553.3" r="1.6"/><circle cx="1163.0" cy="503.3" r="1.6"/>
 </g>
</svg>
<span class="t" style="left:1014px;top:507px;width:80px;height:48px;line-height:48px;font-size:38px;color:#5c5c5c;text-align:center;transform:scaleX(.84);filter:blur(.85px);letter-spacing:-.5px;">false</span>


<!-- ===== palette panel ===== -->
<!-- palette panel frame -->
<div class="a" style="left:615px;top:860px;width:876px;height:112px;background:#252526;border:1px solid #3f3f46;"></div>
<div class="a" style="left:616px;top:889px;width:874px;height:1px;background:#3f3f46;"></div>
<span class="t" style="left:621px;top:862px;transform:scaleX(0.9383);transform-origin:0 50%;">Палитра</span>
<div class="dots" style="left:693px;top:871px;width:715px;--c:#58585a;"></div>
<div class="dots" style="left:695px;top:875px;width:711px;--c:#58585a;"></div>
<div class="dots" style="left:693px;top:879px;width:715px;--c:#58585a;"></div>
<svg style="left:1420px;top:861px;" width="70" height="28" viewBox="1420 861 70 28" fill="none">
 <path d="M1428.8 872 H1437.3 L1433 877 Z" fill="#a6a6a6"/>
 <path d="M1452 870 H1459.2 V876 H1460.4 V877.2 H1450.8 V876 H1452 Z" fill="#a6a6a6"/>
 <path d="M1454.6 871.2 V876" stroke="#252526" stroke-width=".9"/>
 <path d="M1455.6 877.2 V881.2" stroke="#a6a6a6" stroke-width="1.2"/>
 <path d="M1472.4 870.4 L1481.8 879.8 M1481.8 870.4 L1472.4 879.8" stroke="#a8a8a8" stroke-width="1.7"/>
</svg>
<!-- content -->
<div class="a g" style="left:621px;top:895px;width:863px;height:70px;"></div>
<div class="a" style="left:621px;top:965px;width:864px;height:1px;background:#161614;"></div>
<div class="a" style="left:1484px;top:895px;width:1px;height:71px;background:#161614;"></div>
<div class="a" style="left:621px;top:895px;width:65px;height:40px;background:#222220;border-left:1px solid #161614;border-top:1px solid #161614;"></div>
<div class="btn" style="left:686px;top:895px;width:49px;height:41px;"></div>
<div class="btn" style="left:735px;top:895px;width:91px;height:41px;"></div>
<span class="t" style="left:636px;top:906px;transform:scaleX(0.9436);transform-origin:0 50%;">Окна</span>
<span class="t" style="left:701px;top:906px;transform:scaleX(0.9104);transform-origin:0 50%;">ФБ</span>
<span class="t" style="left:750px;top:906px;transform:scaleX(0.9541);transform-origin:0 50%;">Объекты</span>
<div class="a" style="left:1365px;top:895px;width:40px;height:40px;background:#222220;"></div>
<div class="btn" style="left:1405px;top:895px;width:40px;height:40px;"></div>
<div class="btn" style="left:1445px;top:895px;width:40px;height:40px;"></div>
<svg style="left:1360px;top:893px;" width="130" height="75" viewBox="1360 893 130 75" fill="none" stroke="#e8e8e6" stroke-width="1.1">
 <rect x="1373.5" y="903.5" width="10" height="10"/><rect x="1387.5" y="903.5" width="10" height="10"/>
 <rect x="1373.5" y="917.5" width="10" height="10"/><rect x="1387.5" y="917.5" width="10" height="10"/>
 <rect x="1413.5" y="903.5" width="24" height="24"/><path d="M1421.5 903.5 V927.5 M1413.5 911.5 H1437.5 M1413.5 919.5 H1437.5"/>
 <rect x="1453.5" y="903.5" width="6" height="24"/><rect x="1462" y="903.5" width="6" height="24"/><rect x="1470.5" y="903.5" width="6.5" height="24"/>
</svg>
<!-- search -->
<div class="a" style="left:627px;top:941px;width:363px;height:24px;background:#444442;border:1px solid #626260;border-bottom:none;"></div>
<span class="t" style="left:635px;top:945px;transform:scaleX(0.8854);transform-origin:0 50%;font-style:italic;color:#6e6e6c;">Поиск...</span>
<div class="a" style="left:999px;top:936px;width:2px;height:29px;background:#424240;"></div><div class="a" style="left:994px;top:936px;width:5px;height:29px;background:repeating-linear-gradient(-62deg,transparent 0 3.2px,#5c5c5a 3.2px 4px);"></div>
<!-- clipped items -->
<div class="a" style="left:1051px;top:954px;width:45px;height:11px;border:1px solid #e6e6e4;border-bottom:none;"></div>
<div class="a" style="left:1068px;top:961px;width:13px;height:4px;border:1px solid #d0d0ce;border-bottom:none;"></div>
<div class="a" style="left:1189px;top:953px;width:45px;height:12px;border:1px solid #e6e6e4;border-bottom:none;overflow:hidden;"><span class="t" style="left:3px;top:3.5px;font-size:16px;color:#dcdcda;">100</span></div>
<div class="a" style="left:1221px;top:956px;width:10px;height:9px;border:1px solid #e6e6e4;border-bottom:none;"></div>
<svg style="left:1222px;top:957px;" width="8" height="8" viewBox="0 0 8 8"><path d="M1 5.6 L4 2 L7 5.6 Z" fill="#e6e6e4"/></svg>
<div class="a" style="left:1327px;top:954px;width:45px;height:11px;border:1px solid #e6e6e4;border-bottom:none;overflow:hidden;"><span class="t" style="left:15.5px;top:2px;font-size:19px;color:#dcdcda;">T</span></div>
<div class="a" style="left:1454px;top:944px;width:21px;height:21px;background:#6c6c6a;"></div>
<svg style="left:1454px;top:944px;" width="21" height="21" viewBox="0 0 21 21"><path d="M5.6 9 L10.5 4 L15.4 9 Z M5.6 15 L10.5 20 L15.4 15 Z" fill="#8e8e8c"/></svg>
<!-- bottom tabs -->
<div class="a" style="left:615px;top:971px;width:70px;height:28px;background:#252526;border:1px solid #3f3f46;border-top:none;"></div>
<span class="t" style="left:621px;top:973px;transform:scaleX(0.9221);transform-origin:0 50%;">Палитра</span>
<span class="t" style="left:691px;top:973px;transform:scaleX(0.9329);transform-origin:0 50%;">Легенда</span>
<div class="a" style="left:0;top:1001px;width:1920px;height:1px;background:#3f3f46;"></div>


<!-- ===== properties panel ===== -->
<!-- properties panel frame -->
<div class="a" style="left:1496px;top:160px;width:394px;height:839px;background:#252526;border:1px solid #3f3f46;"></div>
<div class="a" style="left:1497px;top:189px;width:392px;height:1px;background:#3f3f46;"></div>
<span class="t" style="left:1502px;top:162px;transform:scaleX(0.9403);transform-origin:0 50%;">Свойства</span>
<div class="dots" style="left:1579px;top:171px;width:228px;--c:#58585a;"></div>
<div class="dots" style="left:1581px;top:175px;width:224px;--c:#58585a;"></div>
<div class="dots" style="left:1579px;top:179px;width:228px;--c:#58585a;"></div>
<svg style="left:1820px;top:161px;" width="70" height="28" viewBox="1820 161 70 28" fill="none">
 <path d="M1827.8 172 H1836.3 L1832 177 Z" fill="#a6a6a6"/>
 <path d="M1850.8 169.8 H1858 V175.8 H1859.2 V177 H1849.6 V175.8 H1850.8 Z" fill="#a6a6a6"/>
 <path d="M1853.4 171 V175.8" stroke="#252526" stroke-width=".9"/>
 <path d="M1854.4 177 V181.2" stroke="#a6a6a6" stroke-width="1.2"/>
 <path d="M1871.4 170.4 L1880.8 179.8 M1880.8 170.4 L1871.4 179.8" stroke="#a8a8a8" stroke-width="1.7"/>
</svg>
<!-- side strip -->
<div class="a" style="left:1914px;top:161px;width:5px;height:94px;background:#3f3f46;"></div>
<span class="t" style="left:1860px;top:197px;width:84px;text-align:center;transform:rotate(-90deg);letter-spacing:.1px;">Мини-карта</span>
<!-- body -->
<div class="a g" style="left:1502px;top:195px;width:382px;height:798px;"></div>
<span class="t" style="left:1661px;top:198px;letter-spacing:-0.388px;">Объект 1</span>
<div class="btn" style="left:1502px;top:227px;width:34px;height:34px;border-left:none;"></div>
<div class="btn" style="left:1536px;top:227px;width:34px;height:34px;"></div>
<div class="fld" style="left:1570px;top:227px;width:212px;height:34px;"></div>
<span class="t" style="left:1578px;top:234px;transform:scaleX(0.8677);transform-origin:0 50%;font-style:italic;color:#767674;">Поиск...</span>
<div class="a" style="left:1783px;top:228px;width:33px;height:33px;background:#222220;border-bottom:1px solid #161614;"></div>
<div class="btn" style="left:1816px;top:227px;width:34px;height:34px;"></div>
<div class="btn" style="left:1850px;top:227px;width:34px;height:34px;"></div>
<svg style="left:1500px;top:227px;" width="390" height="34" viewBox="1500 227 390 34" fill="none" stroke="#e8e8e6" stroke-width="1.1">
 <!-- AZ filter -->
 <path d="M1510.2 241.4 L1512.3 235.6 L1514.4 241.4 M1511 239.6 H1513.6" stroke-width="1.2"/>
 <path d="M1510.2 244 H1514.4 L1510.2 250.2 H1514.6" stroke-width="1.2"/>
 <path d="M1516.6 235.8 H1529 L1523 244.4 V253.6 H1518.6 V244.4 Z" stroke-width="1.2"/>
 <!-- expand icon -->
 <path d="M1544.4 235.4 V254 M1544.4 240.4 H1550.4 M1551.4 249.8 H1556"/>
 <path d="M1550.4 236.6 L1555.4 240.4 L1550.4 244.2 Z"/>
 <path d="M1551.2 246.4 L1546 249.8 L1551.2 253.4 Z"/>
 <rect x="1557" y="235.6" width="5.8" height="11.4"/><path d="M1557 239.4 H1562.8 M1557 243.2 H1562.8"/>
 <!-- list -->
 <rect x="1792.5" y="235.5" width="13" height="7.6" stroke-width="1.2"/><path d="M1793.6 238 H1804.4 M1793.6 240.4 H1804.4" stroke="#8c8c8a" stroke-width="1.4"/>
 <rect x="1792.5" y="246.5" width="13" height="7.6" stroke-width="1.2"/><path d="M1793.6 249 H1804.4 M1793.6 251.4 H1804.4" stroke="#8c8c8a" stroke-width="1.4"/>
 <!-- flag -->
 <path d="M1825.6 235.2 V254.2 M1825.6 236.6 H1832 V239 H1841 L1838 244.8 L1841 250.4 H1832.6 V248 H1825.6" stroke-width="1.2"/>
 <!-- key -->
 <path d="M1862.6 235.6 H1872 Q1873.6 235.6 1873.6 237.2 V242.4 Q1873.6 244 1872 244 H1870 V250.6 L1867 253.6 H1864.8 V249.6 L1866 248.6 L1864.8 247.4 V244 H1862.6 Q1861 244 1861 242.4 V237.2 Q1861 235.6 1862.6 235.6 Z" stroke-width="1.2"/>
 <rect x="1866.2" y="239" width="2.2" height="1.8" fill="#e8e8e6" stroke="none"/>
</svg>
<!-- section: Общие -->
<div class="hdr" style="left:1502px;top:266px;width:382px;height:35px;"></div>
<span class="t" style="left:1518px;top:274px;letter-spacing:-0.492px;">Общие</span>
<!-- splitter -->
<div class="a" style="left:1741px;top:301px;width:2px;height:209px;background:#424240;"></div><div class="a" style="left:1736px;top:301px;width:5px;height:209px;background:repeating-linear-gradient(-62deg,transparent 0 3.2px,#5c5c5a 3.2px 4px);"></div>
<div class="a" style="left:1741px;top:550px;width:2px;height:35px;background:#424240;"></div><div class="a" style="left:1736px;top:550px;width:5px;height:35px;background:repeating-linear-gradient(-62deg,transparent 0 3.2px,#5c5c5a 3.2px 4px);"></div>
<div class="a" style="left:1741px;top:624px;width:2px;height:140px;background:#424240;"></div><div class="a" style="left:1736px;top:624px;width:5px;height:140px;background:repeating-linear-gradient(-62deg,transparent 0 3.2px,#5c5c5a 3.2px 4px);"></div>
<span class="t" style="left:1545px;top:310px;letter-spacing:-0.201px;">Отключить исполнение</span>
<div class="a" style="left:1746px;top:309px;width:20px;height:20px;border:1px solid #ececea;"></div>
<span class="t" style="left:1545px;top:345px;letter-spacing:-0.102px;">Имя</span>
<div class="fld" style="left:1745px;top:337px;width:135px;height:34px;border-color:#646462;"></div>
<span class="t" style="left:1753px;top:343.5px;transform:scaleX(0.9336);transform-origin:0 50%;font-weight:bold;">Объект 1</span>
<span class="t" style="left:1545px;top:380px;letter-spacing:-0.031px;">Полное имя</span>
<div class="fld" style="left:1745px;top:373px;width:135px;height:32px;border-color:#646462;"><div class="a" style="left:0;top:0;width:128px;height:30px;overflow:hidden;"><span class="t" style="left:7px;top:6px;transform:scaleX(0.9407);transform-origin:0 50%;color:#949492;">Объекты.Объект 1</span></div></div>
<span class="t" style="left:1545px;top:415px;letter-spacing:-0.184px;">Метки</span>
<div class="fld" style="left:1745px;top:407px;width:135px;height:33px;border-color:#646462;"></div>
<span class="t" style="left:1545px;top:450px;letter-spacing:0.037px;">Комментарий</span>
<div class="fld" style="left:1745px;top:442px;width:135px;height:33px;border-color:#646462;"></div>
<span class="t" style="left:1545px;top:485px;letter-spacing:-0.190px;">Описание</span>
<div class="fld" style="left:1745px;top:477px;width:135px;height:33px;border-color:#646462;"></div>
<!-- section: Задача -->
<div class="hdr" style="left:1502px;top:515px;width:382px;height:35px;"></div>
<span class="t" style="left:1518px;top:523px;transform:scaleX(0.9228);transform-origin:0 50%;">Задача</span>
<span class="t" style="left:1545px;top:559px;letter-spacing:-0.149px;">Место исполнения</span>
<span class="t" style="left:1749px;top:559px;transform:scaleX(0.9434);transform-origin:0 50%;font-weight:bold;">В задаче экрана</span>
<div class="a" style="left:1538px;top:556px;width:339px;height:28px;border:2px solid #f84040;"></div>
<!-- section: Разрешения -->
<div class="hdr" style="left:1502px;top:589px;width:382px;height:35px;"></div>
<span class="t" style="left:1518px;top:597px;transform:scaleX(0.9407);transform-origin:0 50%;">Разрешения</span>
<span class="t" style="left:1545px;top:633px;letter-spacing:-0.339px;">Всегда отображать в дер...</span>
<div class="a" style="left:1746px;top:632px;width:20px;height:20px;border:1px solid #ececea;"></div>
<span class="t" style="left:1545px;top:668px;transform:scaleX(0.9296);transform-origin:0 50%;">Доступ через OPC UA</span>
<span class="t" style="left:1749px;top:668px;letter-spacing:-0.075px;">По умолчанию</span>
<span class="t" style="left:1545px;top:703px;letter-spacing:-0.168px;">Отображать при выборе...</span>
<span class="t" style="left:1749px;top:703px;letter-spacing:-0.075px;">По умолчанию</span>
<span class="t" style="left:1545px;top:738px;letter-spacing:-0.357px;">Отображать в дереве вы...</span>
<span class="t" style="left:1749px;top:738px;letter-spacing:-0.075px;">По умолчанию</span>
<svg style="left:1850px;top:262px;" width="30" height="360" viewBox="1850 262 30 360">
 <path d="M1857 287 L1864.4 279.6 L1871.8 287 Z" fill="#e6e6e4"/>
 <path d="M1857 536 L1864.4 528.6 L1871.8 536 Z" fill="#e6e6e4"/>
 <path d="M1857 610 L1864.4 602.6 L1871.8 610 Z" fill="#e6e6e4"/>
</svg>


<!-- ===== status bar ===== -->
<div class="a" style="left:0;top:1002px;width:1920px;height:28px;background:#333331;"></div>
<span class="t" style="left:4px;top:1006px;letter-spacing:-0.286px;">Библиотеки.HMI.Окна.Диалог.Текстовый ввод</span>
<span class="t" style="left:1583px;top:1006px;transform:scaleX(0.9102);transform-origin:0 50%;">160,206</span>
<span class="t" style="left:1834px;top:1006px;transform:scaleX(0.8949);transform-origin:0 50%;">2.23</span>
<svg style="left:1660px;top:1000px;" width="260" height="30" viewBox="1660 1000 260 30" fill="none">
 <circle cx="1677" cy="1015.6" r="10.2" stroke="#e6e6e4" stroke-width="1.3"/>
 <path d="M1670.4 1015.6 H1683.6" stroke="#e6e6e4" stroke-width="2.3"/>
 <rect x="1692.5" y="1013.5" width="109" height="4" rx="1.8" fill="#5a5a58" stroke="#1c1c1a" stroke-width="1"/>
 <rect x="1738.6" y="1002.6" width="4.2" height="27" rx="2" fill="#333332" stroke="#e0e0de" stroke-width="1.1"/>
 <circle cx="1817" cy="1015.6" r="10.2" stroke="#e6e6e4" stroke-width="1.3"/>
 <path d="M1810.4 1015.6 H1823.6 M1817 1009 V1022.2" stroke="#e6e6e4" stroke-width="2.3"/>
 <rect x="1885" y="1002" width="24.5" height="28" fill="#565654"/>
 <path d="M1885.5 1030 V1002.5 H1909" stroke="#6e6e6c" stroke-width="1"/>
 <path d="M1891 1009.6 H1903.2" stroke="#e4e4e2" stroke-width="1.1"/>
 <path d="M1891 1012.2 H1903.2" stroke="#b0b0ae" stroke-width="1.6"/>
 <path d="M1897.1 1012 V1016" stroke="#e4e4e2" stroke-width="2.2"/>
 <path d="M1891.6 1015.4 H1902.6 L1897.1 1021.2 Z" fill="#e4e4e2"/>
</svg>


</body>
</html>
